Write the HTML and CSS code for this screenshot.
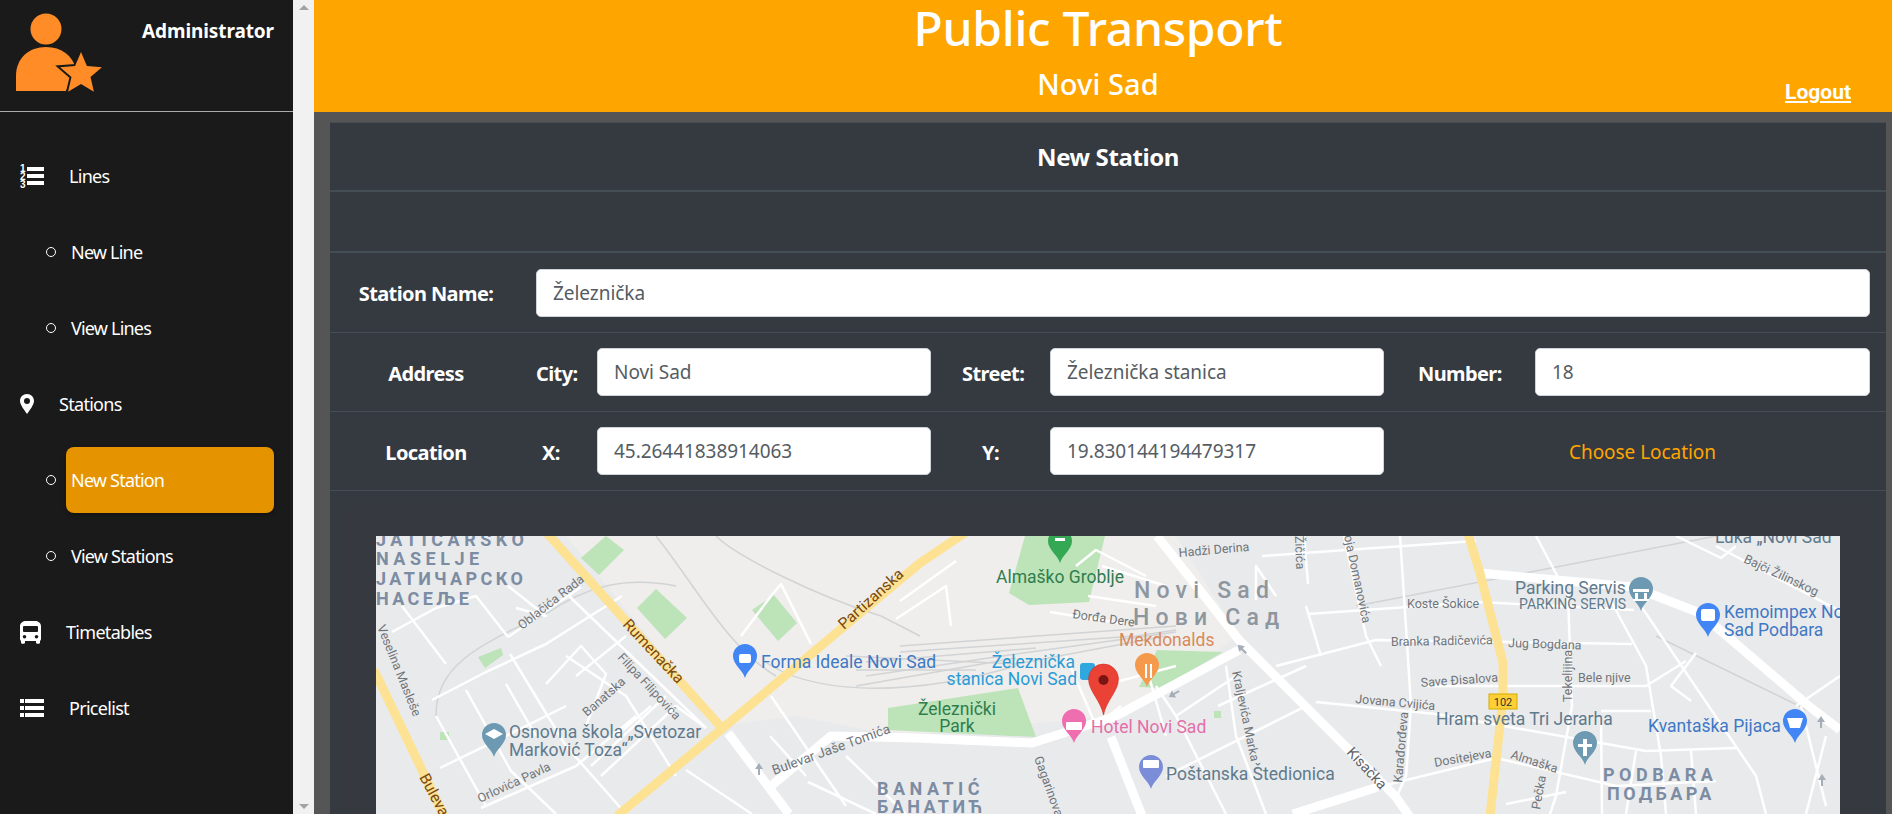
FILE: index.html
```html
<!DOCTYPE html>
<html lang="en">
<head>
    <meta charset="UTF-8">
    <meta name="viewport" content="width=device-width, initial-scale=1.0">
    <title>Public Transport</title>
    <link rel="stylesheet" href="styles.css">
</head>
<body>

    <aside class="sidebar">
        <div class="user-box">
            <svg class="user-icon" width="110" height="96" viewBox="0 0 110 96">
                <circle cx="46" cy="29" r="15.5" fill="#ff8c26"/>
                <path d="M16 91 V76 C16 58 29 47 46 47 C62 47 72 56 76 68 L66 91 Z" fill="#ff8c26"/>
                <path d="M81 52 L86.900 65.900 L101.900 67.200 L90.500 77.100 L93.900 91.800 L81 84 L68.100 91.800 L71.500 77.100 L60.100 67.200 L75.100 65.900 Z" fill="#ff8c26" stroke="#1a1a1a" stroke-width="4" paint-order="stroke"/>
            </svg>
            <span class="user-name">Administrator</span>
        </div>

        <nav class="menu">
            <a class="menu-item" href="#">
                <svg width="24" height="25" viewBox="0 0 24 25" fill="#fff">
                    <text class="list-num" x="0" y="8">1</text>
                    <text class="list-num" x="0" y="16">2</text>
                    <text class="list-num" x="0" y="24">3</text>
                    <rect x="7" y="3" width="17" height="4"/>
                    <rect x="7" y="10" width="17" height="4"/>
                    <rect x="7" y="17" width="17" height="4"/>
                </svg>
                Lines
            </a>
            <div class="sub-item"><a class="sub-link" href="#">New Line</a></div>
            <div class="sub-item"><a class="sub-link" href="#">View Lines</a></div>

            <a class="menu-item" href="#">
                <svg width="14" height="20" viewBox="0 0 14 20" fill="#fff">
                    <path fill-rule="evenodd" d="M7 0 C3 0 0 3 0 7 C0 11 5 17 7 20 C9 17 14 11 14 7 C14 3 11 0 7 0 Z M7 4 A3 3 0 1 1 7 10 A3 3 0 1 1 7 4 Z"/>
                </svg>
                Stations
            </a>
            <div class="sub-item"><a class="sub-link active" href="#">New Station</a></div>
            <div class="sub-item"><a class="sub-link" href="#">View Stations</a></div>

            <a class="menu-item" href="#">
                <svg width="21" height="23" viewBox="0 0 21 23" fill="#fff">
                    <path fill-rule="evenodd" d="M6 0 H15 C18 0 21 2 21 5 V18 C21 19 20 20 20 20 V22 C20 23 16 23 16 22 V20 H5 V22 C5 23 1 23 1 22 V20 C1 20 0 19 0 18 V5 C0 2 3 0 6 0 Z M4 5 C3.500 5 3 5.500 3 6 V10 C3 10.500 3.500 11 4 11 H17 C17.500 11 18 10.500 18 10 V6 C18 5.500 17.500 5 17 5 Z M4.500 14 A1.800 1.800 0 1 0 4.500 17.600 A1.800 1.800 0 1 0 4.500 14 Z M16.500 14 A1.800 1.800 0 1 0 16.500 17.600 A1.800 1.800 0 1 0 16.500 14 Z"/>
                </svg>
                Timetables
            </a>
            <a class="menu-item" href="#">
                <svg width="24" height="18" viewBox="0 0 24 18" fill="#fff">
                    <rect x="0" y="0" width="4" height="4"/><rect x="5" y="0" width="19" height="4"/>
                    <rect x="0" y="7" width="4" height="4"/><rect x="5" y="7" width="19" height="4"/>
                    <rect x="0" y="14" width="4" height="4"/><rect x="5" y="14" width="19" height="4"/>
                </svg>
                Pricelist
            </a>
        </nav>
    </aside>

    <div class="scroll-track">
        <span class="arrow-up"></span>
        <span class="arrow-down"></span>
    </div>

    <main class="main">
        <header class="top-bar">
            <div class="top-spacer"></div>
            <div class="top-title">
                <h1>Public Transport</h1>
                <h2>Novi Sad</h2>
            </div>
            <div class="top-logout"><a href="#">Logout</a></div>
        </header>

        <section class="panel">
            <div class="panel-title">New Station</div>
            <div class="panel-empty"></div>

            <div class="row-name">
                <label class="row-label" for="stationName">Station Name:</label>
                <input type="text" id="stationName" value="Železnička">
            </div>

            <div class="row-fields">
                <span class="row-label">Address</span>
                <label class="field-label" for="city">City:</label>
                <input type="text" id="city" value="Novi Sad">
                <label class="field-label pad-street" for="street">Street:</label>
                <input type="text" id="street" value="Železnička stanica">
                <label class="field-label pad-number" for="number">Number:</label>
                <input type="text" id="number" value="18">
            </div>

            <div class="row-fields">
                <span class="row-label">Location</span>
                <label class="field-label pad-x" for="locX">X:</label>
                <input type="text" id="locX" value="45.26441838914063">
                <label class="field-label pad-y" for="locY">Y:</label>
                <input type="text" id="locY" value="19.830144194479317">
                <a class="choose-link" href="#">Choose Location</a>
            </div>

            <div class="map-card">
                <svg class="map" width="1464" height="290" viewBox="0 0 1464 290">
                    <defs>
                        <path id="pin" d="M0 0 C-2 -8 -12 -13 -12 -22 A12 12 0 1 1 12 -22 C12 -13 2 -8 0 0 Z"/>
                        <path id="way" d="M0 -6 L4 0 L1 0 L1 6 L-1 6 L-1 0 L-4 0 Z"/>
                    </defs>

                    <rect width="1464" height="290" class="land"/>
                    <path class="land-warm" d="M190 0 H800 L863 100 L740 180 L524 200 L420 180 L345 190 Z"/>

                    <!-- parks -->
                    <g class="park">
                        <path d="M205 22 L230 0 L248 14 L223 39 Z"/>
                        <path d="M261 72 L280 53 L311 82 L289 103 Z"/>
                        <path d="M376 74 L398 59 L421 87 L402 105 Z"/>
                        <path d="M102 121 L125 112 L127 119 L109 132 Z"/>
                        <path d="M64 196 H73 V204 H64 Z"/>
                        <path d="M649 0 H729 L713 66 L653 69 L633 57 Z"/>
                        <path d="M512 172 L642 152 L660 201 L512 194 Z"/>
                        <path d="M781 114 L847 116 L785 152 L763 151 Z"/>
                        <path d="M838 175 H845 V182 H838 Z"/>
                    </g>

                    <!-- railway -->
                    <g class="rail">
                        <path d="M524 110 L800 90"/>
                        <path d="M524 116 L760 100 L800 94"/>
                        <path d="M470 120 L640 128 L790 100"/>
                        <path d="M490 140 L640 118 L800 96"/>
                        <path d="M480 150 L640 122"/>
                        <path d="M490 126 L660 112"/>
                        <path d="M480 134 H600"/>
                        <path d="M388 125 C430 155 520 165 640 130"/>
                        <path d="M340 0 C360 20 440 60 505 80 L544 100"/>
                        <path d="M280 0 C320 50 350 110 400 140"/>
                        <path d="M980 70 L1340 0"/>
                        <path d="M1280 100 L1464 190"/>
                        <path d="M60 180 C60 130 100 110 170 78 C210 50 250 40 300 50"/>
                    </g>

                    <!-- thin streets -->
                    <g class="street">
                        <path d="M56 164 L110 136 L170 108 L246 60"/>
                        <path d="M132 101 L205 51"/>
                        <path d="M16 96 L60 72 L100 60 L132 101"/>
                        <path d="M26 70 L70 128"/>
                        <path d="M132 50 L170 80 L140 72"/>
                        <path d="M134 118 L190 210 L250 278"/>
                        <path d="M90 154 L135 235 L180 278"/>
                        <path d="M60 180 L110 270"/>
                        <path d="M130 148 L160 200"/>
                        <path d="M190 120 L250 160 L300 240"/>
                        <path d="M193 60 L330 192"/>
                        <path d="M170 148 L205 110 L230 138 L210 190"/>
                        <path d="M200 140 L250 100"/>
                        <path d="M225 240 L300 170 L330 192"/>
                        <path d="M240 200 L275 170"/>
                        <path d="M215 230 L290 160"/>
                        <path d="M64 232 L150 190 L190 170"/>
                        <path d="M105 272 L200 230 L260 180"/>
                        <path d="M310 234 L376 278"/>
                        <path d="M395 160 L470 270"/>
                        <path d="M394 200 L430 240"/>
                        <path d="M432 246 L500 278"/>
                        <path d="M470 220 L530 278"/>
                        <path d="M365 100 L395 60 L405 48 L435 108"/>
                        <path d="M520 83 L570 50 L575 90"/>
                        <path d="M524 65 L580 25"/>
                        <path d="M700 30 L720 14 L770 40"/>
                        <path d="M726 30 L790 50"/>
                        <path d="M712 60 L780 70"/>
                        <path d="M674 76 L750 88"/>
                        <path d="M690 120 L720 190 L745 170"/>
                        <path d="M740 146 L800 130"/>
                        <path d="M780 150 L800 180 L850 278"/>
                        <path d="M800 180 L860 140"/>
                        <path d="M770 130 L790 200"/>
                        <path d="M790 240 L930 170"/>
                        <path d="M842 170 L930 130"/>
                        <path d="M850 130 L860 200 L890 278"/>
                        <path d="M886 20 L970 14 L1100 5"/>
                        <path d="M880 64 L880 30 L900 60"/>
                        <path d="M928 0 L932 48"/>
                        <path d="M968 0 L990 100 L1005 130"/>
                        <path d="M930 70 L945 120"/>
                        <path d="M932 78 L1104 66 L1258 74"/>
                        <path d="M900 130 L1000 104 L1256 108"/>
                        <path d="M1050 150 H1270 L1310 125"/>
                        <path d="M940 166 L1060 178 L1270 215 L1360 212"/>
                        <path d="M1024 0 L1028 60 L1035 170 L1030 240 L1020 262"/>
                        <path d="M1002 251 L1120 222 L1240 250 L1340 245"/>
                        <path d="M1160 0 L1192 60 L1196 170 L1180 260 L1170 290"/>
                        <path d="M1235 65 L1270 130 L1285 220 L1290 278"/>
                        <path d="M1265 70 L1380 240 L1390 278"/>
                        <path d="M1320 117 L1295 150 L1315 165"/>
                        <path d="M1225 175 H1275"/>
                        <path d="M1225 180 L1226 278"/>
                        <path d="M1260 215 L1250 278"/>
                        <path d="M1315 215 L1320 278"/>
                        <path d="M1130 268 L1190 256"/>
                        <path d="M1340 10 L1464 75"/>
                        <path d="M1300 0 L1345 22 L1360 10"/>
                        <path d="M1420 170 L1464 140"/>
                        <path d="M1425 170 L1450 270"/>
                        <path d="M1450 200 L1430 278"/>
                    </g>

                    <!-- main streets -->
                    <g class="road-white">
                        <path d="M352 197 L413 278"/>
                        <path d="M395 250 L455 200 L540 202 L656 207 L738 181 L863 114"/>
                        <path d="M735 201 L770 290"/>
                        <path d="M781 0 L863 104 L1020 261 L1040 290"/>
                        <path d="M917 278 L1002 251"/>
                        <path d="M1104 37 L1257 51 L1324 77 L1434 171 L1464 194"/>
                    </g>

                    <g class="road-yellow">
                        <path d="M170 -4 L345 191"/>
                        <path d="M590 -4 L544 27 L348 191 L241 280"/>
                        <path d="M-2 134 L68 280"/>
                        <path d="M1092 -2 L1104 37 L1127 127 L1127 161 L1114 280"/>
                    </g>

                    <g class="way">
                        <use href="#way" x="383" y="233"/>
                        <use href="#way" transform="translate(866 113) rotate(-45)"/>
                        <use href="#way" transform="translate(798 158) rotate(-120)"/>
                        <use href="#way" x="1445" y="186"/>
                        <use href="#way" x="1446" y="244"/>
                    </g>

                    <!-- pins -->
                    <use href="#pin" x="369" y="142" class="pin-blue"/>
                    <use href="#pin" x="118" y="221" class="pin-slate"/>
                    <use href="#pin" x="684" y="27" class="pin-green"/>
                    <use href="#pin" x="698" y="207" class="pin-pink"/>
                    <use href="#pin" x="771" y="151" class="pin-orange"/>
                    <use href="#pin" x="775" y="253" class="pin-violet"/>
                    <use href="#pin" x="1265" y="75" class="pin-slate"/>
                    <use href="#pin" x="1332" y="101" class="pin-blue"/>
                    <use href="#pin" x="1419" y="207" class="pin-blue"/>
                    <use href="#pin" x="1209" y="229" class="pin-slate"/>

                    <g class="pin-mark">
                        <rect x="363" y="118" width="12" height="9" rx="2"/>
                        <path d="M109 198 L118 193 L127 198 L118 203 Z"/>
                        <rect x="679" y="2" width="10" height="3"/>
                        <rect x="690" y="186" width="16" height="8" rx="1"/>
                        <rect x="769" y="128" width="2" height="14"/>
                        <rect x="774" y="128" width="2" height="14"/>
                        <rect x="767" y="224" width="16" height="8" rx="1"/>
                        <path d="M1257 53 H1273 V56 H1257 Z M1259 57 H1262 V63 H1259 Z M1268 57 H1271 V63 H1268 Z M1257 63 H1273 V65 H1257 Z"/>
                        <rect x="1325" y="73" width="14" height="12" rx="2"/>
                        <path d="M1411 182 H1427 L1424 192 H1414 Z"/>
                        <path d="M1207 203 H1211 V208 H1216 V211 H1211 V220 H1207 V211 H1202 V208 H1207 Z"/>
                    </g>

                    <rect x="704" y="127" width="15" height="17" rx="3" class="pin-cyan"/>

                    <!-- selected location -->
                    <path class="marker" d="M727.500 179 C725 165 712.500 155 712.500 143 A15 15 0 1 1 742.500 143 C742.500 155 730 165 727.500 179 Z"/>
                    <circle class="marker-dot" cx="727.500" cy="144" r="5"/>

                    <rect x="1113" y="158" width="28" height="15" class="shield"/>
                    <text class="shield-text" x="1127" y="170">102</text>

                    <!-- area names -->
                    <g class="t-area">
                        <text x="0" y="10">JATIČARSKO</text>
                        <text x="0" y="29">NASELJE</text>
                        <text x="0" y="49" class="t-cy">ЈАТИЧАРСКО</text>
                        <text x="0" y="69" class="t-cy">НАСЕЉЕ</text>
                        <text x="501" y="259">BANATIĆ</text>
                        <text x="501" y="277" class="t-cy">БАНАТИЋ</text>
                        <text x="1227" y="245">PODBARA</text>
                        <text x="1231" y="264" class="t-cy">ПОДБАРА</text>
                    </g>
                    <g class="t-city">
                        <text x="758" y="62">Novi Sad</text>
                        <text x="757" y="89">Нови Сад</text>
                    </g>

                    <!-- street names -->
                    <g class="t-street">
                        <text transform="translate(146 94) rotate(-38)">Oblačića Rada</text>
                        <text transform="translate(1 91) rotate(68)">Veselina Masleše</text>
                        <text transform="translate(241 122) rotate(47)">Filipa Filipovića</text>
                        <text transform="translate(211 181) rotate(-41)">Banatska</text>
                        <text transform="translate(104 267) rotate(-25)">Orlovića Pavla</text>
                        <text transform="translate(398 239) rotate(-20)" class="t-mid">Bulevar Jaše Tomića</text>
                        <text transform="translate(696 82) rotate(8)">Đorđa Dere</text>
                        <text transform="translate(803 21) rotate(-5)">Hadži Derina</text>
                        <text transform="translate(856 136) rotate(78)">Kraljevića Marka</text>
                        <text transform="translate(658 222) rotate(70)">Gagarinova</text>
                        <text transform="translate(919 0) rotate(88)">Žičića</text>
                        <text transform="translate(968 0) rotate(78)">oja Domanovića</text>
                        <text transform="translate(1026 247) rotate(-85)">Karađorđeva</text>
                        <text transform="translate(979 167) rotate(5)">Jovana Cvijića</text>
                        <text transform="translate(1015 110) rotate(-1)">Branka Radičevića</text>
                        <text transform="translate(1031 72)">Koste Šokice</text>
                        <text transform="translate(1045 151) rotate(-4)">Save Đisalova</text>
                        <text transform="translate(1132 111) rotate(2)">Jug Bogdana</text>
                        <text x="1202" y="146">Bele njive</text>
                        <text transform="translate(1196 166) rotate(-90)">Tekelijina</text>
                        <text transform="translate(1059 231) rotate(-10)">Dositejeva</text>
                        <text transform="translate(1134 222) rotate(18)">Almaška</text>
                        <text transform="translate(1164 274) rotate(-80)">Pečka</text>
                        <text transform="translate(1367 26) rotate(25)">Bajči Žilinskog</text>
                    </g>
                    <g class="t-major">
                        <text transform="translate(246 89) rotate(47)">Rumenačka</text>
                        <text transform="translate(468 94) rotate(-42)">Partizanska</text>
                        <text transform="translate(43 241) rotate(62)">Bulevar</text>
                    </g>
                    <text class="t-dark" transform="translate(970 217) rotate(47)">Kisačka</text>

                    <!-- places -->
                    <g class="t-place t-blue">
                        <text x="385" y="132">Forma Ideale Novi Sad</text>
                        <text x="1348" y="82">Kemoimpex Novi</text>
                        <text x="1348" y="100">Sad Podbara</text>
                        <text x="1272" y="196">Kvantaška Pijaca</text>
                    </g>
                    <g class="t-place t-slate">
                        <text x="133" y="202">Osnovna škola „Svetozar</text>
                        <text x="133" y="220">Marković Toza“</text>
                        <text x="790" y="244">Poštanska Štedionica</text>
                        <text x="1139" y="58">Parking Servis</text>
                        <text x="1143" y="73" class="t-small">PARKING SERVIS</text>
                        <text x="1060" y="189">Hram sveta Tri Jerarha</text>
                        <text x="1339" y="7">Luka „Novi Sad</text>
                    </g>
                    <g class="t-place t-green">
                        <text x="620" y="47">Almaško Groblje</text>
                        <text x="581" y="179" text-anchor="middle">Železnički</text>
                        <text x="581" y="196" text-anchor="middle">Park</text>
                    </g>
                    <g class="t-place t-cyan">
                        <text x="699" y="132" text-anchor="end">Železnička</text>
                        <text x="701" y="149" text-anchor="end">stanica Novi Sad</text>
                    </g>
                    <text class="t-place t-orange" x="743" y="110">Mekdonalds</text>
                    <text class="t-place t-pink" x="715" y="197">Hotel Novi Sad</text>
                </svg>
            </div>
        </section>
    </main>

</body>
</html>
```

FILE: styles.css
```css
* {
    margin: 0;
    padding: 0;
    box-sizing: border-box;
}

body {
    font-family: "Noto Sans", "Open Sans", sans-serif;
    background-color: #555;
    display: flex;
    height: 100vh;
    overflow: hidden;
}

a {
    color: #fff;
    text-decoration: none;
}

/* sidebar */
.sidebar {
    width: 293px;
    flex-shrink: 0;
    background-color: #1a1a1a;
    color: #fff;
}

.user-box {
    height: 112px;
    border-bottom: 1px solid #aaa;
    display: flex;
    justify-content: space-between;
    padding-right: 19px;
}

.user-icon {
    display: block;
}

.user-name {
    font-size: 19px;
    font-weight: 700;
    letter-spacing: -0.1px;
    padding-top: 18px;
}

.menu {
    padding-top: 26px;
}

.menu-item {
    display: flex;
    align-items: center;
    gap: 25px;
    height: 76px;
    padding-left: 20px;
    font-size: 18px;
    letter-spacing: -0.7px;
}

.list-num {
    font-size: 10px;
    font-weight: 700;
    font-family: "Liberation Sans", sans-serif;
}

.sub-item {
    display: flex;
    align-items: center;
    height: 76px;
    padding-left: 46px;
}

.sub-item::before {
    content: "";
    width: 8px;
    height: 8px;
    border: 1.5px solid #fff;
    border-radius: 50%;
    margin-right: 10px;
    flex-shrink: 0;
}

.sub-link {
    display: flex;
    align-items: center;
    width: 208px;
    height: 66px;
    padding-left: 5px;
    border-radius: 8px;
    font-size: 18px;
    letter-spacing: -0.8px;
}

.sub-link.active {
    background-color: #e59400;
    box-shadow: 0 2px 4px rgba(0, 0, 0, 0.3);
}

/* the scrollbar of the sidebar */
.scroll-track {
    width: 21px;
    flex-shrink: 0;
    background-color: #f1f1f1;
    display: flex;
    flex-direction: column;
    justify-content: space-between;
    align-items: center;
    padding: 5px 0;
}

.arrow-up {
    border: 5px solid transparent;
    border-top: 0;
    border-bottom: 5px solid #a3a3a3;
}

.arrow-down {
    border: 5px solid transparent;
    border-bottom: 0;
    border-top: 5px solid #a3a3a3;
}

/* main */
.main {
    flex: 1;
    min-width: 0;
}

.top-bar {
    height: 112px;
    background-color: #ffa500;
    color: #fff;
    display: grid;
    grid-template-columns: 1fr auto 1fr;
    padding-right: 10px;
}

.top-title {
    text-align: center;
}

.top-title h1 {
    font-size: 48px;
    font-weight: 500;
    line-height: 56px;
    letter-spacing: -0.3px;
}

.top-title h2 {
    font-size: 29px;
    font-weight: 500;
    line-height: 38px;
    margin-top: 9px;
    letter-spacing: 0.1px;
}

.top-logout {
    display: flex;
    justify-content: flex-end;
    align-items: flex-end;
    padding: 0 31px 8px 0;
}

.top-logout a {
    font-family: Roboto, sans-serif;
    font-size: 21px;
    font-weight: 700;
    text-decoration: underline;
}

.panel {
    margin: 10px 6px 0 16px;
    background-color: #343a40;
    color: #fff;
    height: 700px;
    border-top: 1px solid #454d55;
}

.panel-title {
    height: 69px;
    border-bottom: 2px solid #454d55;
    display: flex;
    align-items: center;
    justify-content: center;
    font-size: 24px;
    font-weight: 700;
    letter-spacing: -0.4px;
}

.panel-empty {
    height: 61px;
    border-bottom: 2px solid #454d55;
}

.row-name,
.row-fields {
    height: 79px;
    border-bottom: 1px solid #454d55;
    display: grid;
    align-items: center;
    padding-right: 16px;
    font-size: 20px;
    font-weight: 700;
    letter-spacing: -0.6px;
}

.row-name {
    height: 80px;
    grid-template-columns: 206px 1fr;
}

.row-fields {
    grid-template-columns: 206px 61px 334px 119px 334px 151px 335px;
}

.row-label {
    text-align: center;
    padding: 2px 14px 0 0;
}

.field-label {
    padding-top: 2px;
}

.pad-street { padding-left: 31px; }
.pad-number { padding-left: 34px; }
.pad-x { padding-left: 6px; }
.pad-y { text-align: center; }

input[type="text"] {
    width: 100%;
    height: 48px;
    padding: 0 16px;
    border: 1px solid #ced4da;
    border-radius: 5px;
    background-color: #fff;
    color: #555c63;
    font-family: inherit;
    font-size: 19px;
    letter-spacing: -0.05px;
}

.choose-link {
    color: #ffa500;
    font-size: 19px;
    font-weight: 400;
    letter-spacing: -0.05px;
    text-align: center;
    grid-column: 6 / 8;
    padding: 2px 0 0 31px;
}

.map-card {
    margin: 15px 16px 0 14px;
    padding: 30px 30px 0 32px;
    height: 320px;
    background-color: #36393f;
}

/* map */
.map {
    display: block;
    font-family: Roboto, sans-serif;
}

.land { fill: #e9eaec; }
.land-warm { fill: #efeeec; }
.park { fill: #bde3b8; }
.rail { fill: none; stroke: #d2d3d5; stroke-width: 1.5; }
.street { fill: none; stroke: #fff; stroke-width: 2.5; stroke-linejoin: round; }
.road-white { fill: none; stroke: #fff; stroke-width: 9; stroke-linejoin: round; }
.road-yellow { fill: none; stroke: #fde293; stroke-width: 9; stroke-linejoin: round; }
.way { fill: #a4adb8; }

.pin-blue { fill: #4285f4; }
.pin-slate { fill: #6d9ab2; }
.pin-green { fill: #34a853; }
.pin-pink { fill: #ee6eb0; }
.pin-orange { fill: #f59a4d; }
.pin-violet { fill: #7b8dd8; }
.pin-cyan { fill: #2fa8e0; }
.pin-mark { fill: #fff; }

.marker { fill: #ea4335; stroke: #c5221f; stroke-width: 0.5; }
.marker-dot { fill: #7b1414; }

.shield { fill: #fdd135; stroke: #d9a900; stroke-width: 1; }
.shield-text { font-size: 11px; fill: #333; text-anchor: middle; }

.t-area { font-size: 18px; font-weight: 700; letter-spacing: 4.5px; fill: #7c8ca3; }
.t-area .t-cy { letter-spacing: 3.4px; }
.t-city { font-size: 23px; font-weight: 500; letter-spacing: 6.2px; fill: #8e96a0; }
.t-street { font-size: 12.5px; fill: #70757a; }
.t-street .t-mid { font-size: 13.5px; }
.t-major { font-size: 15.5px; fill: #7a4a12; }
.t-dark { font-size: 14.5px; fill: #5f6368; }
.t-place { font-size: 17.5px; }
.t-small { font-size: 14px; }
.t-blue { fill: #3f78c4; }
.t-slate { fill: #5f7a8c; }
.t-green { fill: #2f7d4f; }
.t-cyan { fill: #2a9bd6; }
.t-orange { fill: #d98a5b; }
.t-pink { fill: #e46fa8; }
```
